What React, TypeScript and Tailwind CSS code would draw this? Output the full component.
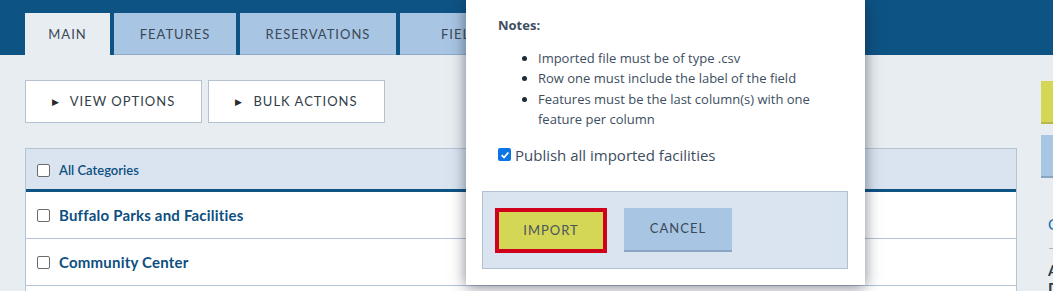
import React from 'react';

const TABS = [
    { label: 'MAIN', width: 'w-[85px]', active: true },
    { label: 'FEATURES', width: 'w-[122px]', active: false },
    { label: 'RESERVATIONS', width: 'w-[156px]', active: false },
    { label: 'FIELDS', width: 'w-[130px]', active: false },
    { label: 'IMAGES', width: 'w-[120px]', active: false },
];

const ROWS = ['Buffalo Parks and Facilities', 'Community Center', 'Sports Fields'];

const NOTES = [
    'Imported file must be of type .csv',
    'Row one must include the label of the field',
    'Features must be the last column(s) with one feature per column',
];

const Box: React.FC<{ checked?: boolean }> = ({ checked }) =>
    checked ? (
        <span className="w-[13px] h-[13px] rounded-[2px] bg-[#0b75e6] flex items-center justify-center flex-shrink-0">
            <svg viewBox="0 0 12 12" className="w-[10px] h-[10px]">
                <path d="M2 6.2 L4.8 9 L10 3" fill="none" stroke="#fff" strokeWidth="2.2" />
            </svg>
        </span>
    ) : (
        <span className="w-[13px] h-[13px] rounded-[2px] border border-[#6b6b6b] bg-white flex-shrink-0" />
    );

const App: React.FC = () => (
    <div className="relative w-[1053px] h-[291px] overflow-hidden bg-[#e8edf2] font-['Lato',sans-serif]">
        {/* Top bar with tabs */}
        <div className="h-[55px] bg-[#0d5384] flex items-end pl-[25px] gap-[4px]">
            {TABS.map((tab) => (
                <div
                    key={tab.label}
                    className={`${tab.width} h-[42px] pt-[2px] flex-shrink-0 flex items-center justify-center text-[13px] tracking-[1px] text-[#3b4856] ${
                        tab.active ? 'bg-[#e8edf2]' : 'bg-[#a8c5e3] border-b border-[#8fabc9]'
                    }`}
                >
                    {tab.label}
                </div>
            ))}
        </div>

        <div className="flex pl-[25px] gap-[24px]">
            {/* Main column */}
            <div className="w-[992px] flex-shrink-0">
                <div className="flex gap-[6px] mt-[25px]">
                    {['VIEW OPTIONS', 'BULK ACTIONS'].map((b) => (
                        <div
                            key={b}
                            className="w-[177px] h-[43px] bg-white border border-[#b3c1d0] flex items-center justify-center gap-[10px] text-[13px] tracking-[1px] text-[#333d48]"
                        >
                            <span className="text-[9px] text-[#2a2a2a]">▶</span>
                            {b}
                        </div>
                    ))}
                </div>

                <div className="mt-[25px] border border-[#b3c4d6] bg-white">
                    <div className="h-[43px] pt-[3px] bg-[#dae4f0] border-b-[3px] border-[#0d5384] flex items-center gap-[9px] pl-[11px]">
                        <Box />
                        <span className="text-[13px] font-semibold text-[#0d4f80]">All Categories</span>
                    </div>
                    {ROWS.map((r) => (
                        <div key={r} className="h-[47px] border-b border-[#b3c4d6] flex items-center gap-[9px] pl-[11px]">
                            <Box />
                            <span className="text-[15px] font-bold text-[#0d4f80] tracking-[0.2px]">{r}</span>
                        </div>
                    ))}
                </div>
            </div>

            {/* Right column (cut off) */}
            <div className="w-[200px] flex-shrink-0 pt-[26px]">
                <div className="h-[43px] bg-[#d4d655] border-b-2 border-[#b6b84a]" />
                <div className="h-[43px] mt-[11px] bg-[#a8c5e3] border-b-2 border-[#8aa5c2]" />
                <div className="mt-[35px] pl-[7px] text-[15px] text-[#1a6faf]">Calendar</div>
                <div className="mt-[12px] ml-[8px] h-px bg-[#a9b4bf]" />
                <div className="mt-[12px] pl-[7px] text-[15px] font-bold text-[#2b3a4a] leading-[18px]">Active</div>
                <div className="pl-[7px] text-[15px] font-bold text-[#2b3a4a] leading-[18px]">Draft</div>
            </div>
        </div>

        {/* Import modal */}
        <div className="absolute left-[466px] top-0 w-[399px] h-[285px] bg-white shadow-[0_2px_14px_rgba(20,30,45,0.55)] font-['Open_Sans',sans-serif]">
            <div className="px-[32px] pt-[16px] text-[#3d4e61]">
                <div className="text-[13px] font-bold leading-[18px]">Notes:</div>
                <ul className="mt-[14px] pl-[40px] list-disc text-[13px] leading-[20.4px] marker:text-[#1d2b3a]">
                    {NOTES.map((n) => (
                        <li key={n}>{n}</li>
                    ))}
                </ul>
                <div className="mt-[15px] flex items-center gap-[4px] text-[15px] leading-[20px]">
                    <Box checked />
                    <span>Publish all imported facilities</span>
                </div>
            </div>
            <div className="absolute left-[16px] top-[191px] w-[366px] h-[78px] bg-[#dae4f0] border border-[#b0c0d3] flex items-start gap-[17px] pl-[12px] pt-[16px]">
                <div className="w-[112px] h-[45px] bg-[#d4d655] border-4 border-[#d0021b] flex items-center justify-center text-[13px] tracking-[1px] text-[#4a5560] font-['Lato',sans-serif]">
                    IMPORT
                </div>
                <div className="w-[108px] h-[44px] bg-[#a8c5e3] border-b-2 border-[#8aa5c2] flex items-center justify-center text-[13px] tracking-[1px] text-[#3b4856] font-['Lato',sans-serif]">
                    CANCEL
                </div>
            </div>
        </div>
    </div>
);

export default App;
